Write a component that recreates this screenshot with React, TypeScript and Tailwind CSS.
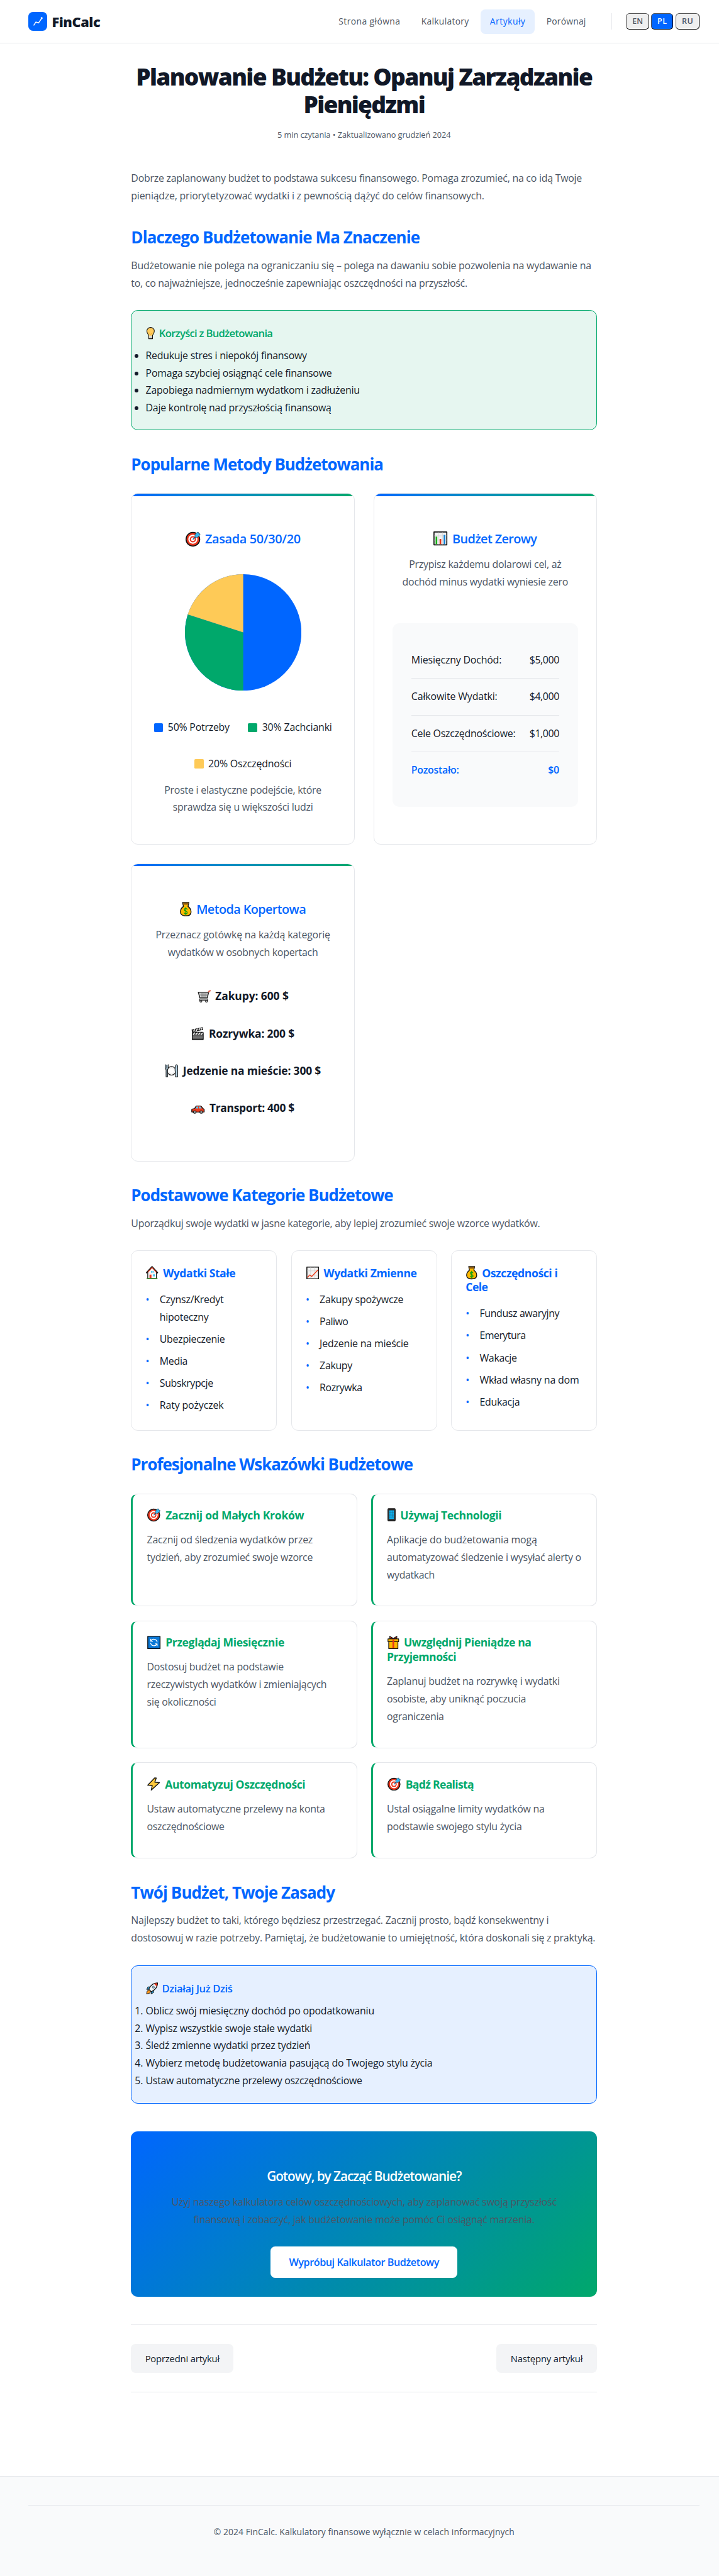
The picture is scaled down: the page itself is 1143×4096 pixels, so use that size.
import React, { useLayoutEffect, useRef } from "react";

let pen: CanvasRenderingContext2D | null = null;

/** One line of text, tracked so that it runs to the given width. */
function T({ w, children, className = "" }: { w: number; children: string; className?: string }) {
  const ref = useRef<HTMLSpanElement>(null);
  useLayoutEffect(() => {
    const el = ref.current;
    if (!el) return;
    pen = pen || document.createElement("canvas").getContext("2d");
    if (!pen) return;
    const s = getComputedStyle(el);
    pen.font = `${s.fontWeight} 100px ${s.fontFamily}`;
    const natural = pen.measureText(children).width / 100;
    const size = parseFloat(s.fontSize);
    el.style.letterSpacing = `${(w / size - natural) / children.length}em`;
  }, [w, children]);
  return (
    <span ref={ref} className={`inline-block whitespace-nowrap ${className}`}>
      {children}
    </span>
  );
}

type Line = [string, number];

function Lines({ lines, className = "" }: { lines: Line[]; className?: string }) {
  return (
    <p className={`text-[17.2px] leading-[30px] text-[#4b5563] ${className}`}>
      {lines.map(([t, w]) => (
        <span key={t} className="block">
          <T w={w}>{t}</T>
        </span>
      ))}
    </p>
  );
}

/* ---------- icons ---------- */

function Svg({ children, className }: { children: React.ReactNode; className: string }) {
  return (
    <svg viewBox="0 0 24 24" preserveAspectRatio="none" className={`shrink-0 ${className}`} strokeLinejoin="round" strokeLinecap="round" fill="none">
      {children}
    </svg>
  );
}

const Target = ({ className = "h-[24px] w-[24px]" }) => (
  <Svg className={className}>
    <circle cx="11.6" cy="12.4" r="10.8" fill="#e8341c" stroke="#111" strokeWidth="1.6" />
    <circle cx="11.6" cy="12.4" r="7.2" fill="#fff" />
    <circle cx="11.6" cy="12.4" r="5" fill="#e8341c" />
    <circle cx="11.6" cy="12.4" r="2.9" fill="#fff" />
    <path d="M12 12.2 17 7" stroke="#0b63a8" strokeWidth="1.4" />
    <path d="M15 9.2 14.8 5.4 18.6 1.2 20.4 1.4 20.8 3.4 22.9 3.8 22.8 5.6 19 9.4Z" fill="#35b8f1" stroke="#123" strokeWidth=".6" />
  </Svg>
);

const Bulb = () => (
  <Svg className="h-[21px] w-[16px]">
    <path d="M7 22.8h10v-6.500c.6-1.600 4.600-3.600 4.600-8.500C21.600 3.500 17 1 12 1S2.400 3.500 2.400 7.800c0 4.900 4 6.900 4.600 8.500Z" fill="#ffcb5c" stroke="#111" strokeWidth="1.700" />
    <path d="M8.500 17h7v4.800h-7Z" fill="#d6d6d6" />
    <path d="M9.500 12.500 12 14.500 14.500 12.500" stroke="#e8a020" strokeWidth="1.200" />
  </Svg>
);

const Bars = () => (
  <Svg className="h-[24px] w-[24px]">
    <rect x="1" y="1" width="22" height="22" fill="#f1f1f1" stroke="#111" strokeWidth="1.800" />
    <path d="M2 7.500h20M2 15h20M8.500 2v20M15.500 2v20" stroke="#d4d4d4" strokeWidth=".8" />
    <path d="M5.200 22V9" stroke="#16b316" strokeWidth="2.800" strokeLinecap="butt" />
    <path d="M12 22V13" stroke="#e8341c" strokeWidth="2.800" strokeLinecap="butt" />
    <path d="M19 22V6" stroke="#0f7fd8" strokeWidth="2.800" strokeLinecap="butt" />
  </Svg>
);

const Trend = () => (
  <Svg className="h-[22px] w-[22px]">
    <rect x="1" y="1" width="22" height="22" fill="#f3f3f3" stroke="#111" strokeWidth="1.800" />
    <path d="M2 8h20M2 16h20M8 2v20M16 2v20" stroke="#cfcfcf" strokeWidth=".9" />
    <path d="M2.500 20 6.500 15.500 10 18.500 21.500 6.500" stroke="#f03a17" strokeWidth="1.600" />
  </Svg>
);

const Bag = ({ className = "h-[25px] w-[20px]" }) => (
  <Svg className={className}>
    <path d="M5.500 1h13l-1.800 6.500C20.500 9.800 23 13 23 16.500c0 4.300-4.600 6.600-11 6.600S1 20.800 1 16.500C1 13 3.500 9.800 7.300 7.500Z" fill="#fdb900" stroke="#111" strokeWidth="1.700" />
    <path d="M6.300 1.500h11.400l-.8 3.200H7.100Z" fill="#8a5a14" />
    <path d="M14.800 12.300c-.6-1-1.600-1.400-2.800-1.400-1.600 0-2.900.8-2.900 2.200 0 3.200 6 1.500 6 4.600 0 1.400-1.400 2.200-3.100 2.200-1.400 0-2.500-.5-3.100-1.600M12 9.300v12" stroke="#10a010" strokeWidth="1.700" />
  </Svg>
);

const Cart = () => (
  <Svg className="h-[22px] w-[23px]">
    <path d="M1.500 4.500 4.200 15h13.300L20 4" fill="#d6d6d6" stroke="#1c1c1c" strokeWidth="1.600" />
    <path d="M1.500 4.500h18L21 2" stroke="#1c1c1c" strokeWidth="1.600" />
    <path d="M5 8h13M5.500 11h12M8 6v7M11.500 6v7M15 6v7" stroke="#555" strokeWidth=".9" />
    <path d="M3.500 17.500h15v2.200h-15Z" fill="#d9d9d9" stroke="#1c1c1c" strokeWidth="1.200" />
    <path d="M20 3.500 22.500 1.500" stroke="#e5735f" strokeWidth="2.600" />
    <circle cx="6" cy="21.300" r="1.800" fill="#ccc" stroke="#1c1c1c" strokeWidth="1.200" />
    <circle cx="16" cy="21.300" r="1.800" fill="#ccc" stroke="#1c1c1c" strokeWidth="1.200" />
  </Svg>
);

const Clapper = () => (
  <Svg className="h-[23px] w-[22px]">
    <rect x="2" y="9.500" width="20.500" height="13.500" rx="1" fill="#555" stroke="#111" strokeWidth="1.500" />
    <path d="M1.300 5 21 1l.8 3.600L2.200 8.800Z" fill="#333" stroke="#111" strokeWidth="1.200" />
    <path d="M4.500 7.300 6.500 4.500M9.500 6.200l2-2.800M14.500 5.200l2-2.800M19 4.200l1-2" stroke="#fff" strokeWidth="1.700" />
    <path d="M4 13.200 6.500 10.500M9 13.200l2.500-2.700M14 13.200l2.500-2.700M19 13.200l2-2.500" stroke="#fff" strokeWidth="1.700" />
    <path d="M3 16.200h18.500M3 19.300h18.500" stroke="#a8a8a8" strokeWidth="1" />
  </Svg>
);

const Plate = () => (
  <Svg className="h-[23px] w-[23px]">
    <circle cx="12" cy="12" r="7.700" fill="#f4f4f4" stroke="#222" strokeWidth="1.300" />
    <circle cx="12" cy="12" r="5.200" fill="#fff" stroke="#ddd" strokeWidth=".7" />
    <path d="M1 1v7l1.300 2V22.800h2.600V10L6 8V1M3.500 1.500v6" fill="#bcd9ea" stroke="#111" strokeWidth="1.200" />
    <path d="M19 22.800V13.500c-1-2-1-12.300 2-12.300 2 0 2.200 2 2.200 5V22.800Z" fill="#bcd9ea" stroke="#111" strokeWidth="1.200" />
  </Svg>
);

const Car = () => (
  <Svg className="mt-[6px] h-[14px] w-[23px]">
    <path d="M1 11.500c0-2 2.500-2.600 5-2.900L8.500 2c.3-.7.7-1 1.500-1h6.200c.8 0 1.400.4 1.800 1.200l3.200 6.600c1.600.6 1.900 1.500 1.900 3V19H1Z" fill="#ea3a1c" stroke="#111" strokeWidth="1.600" />
    <path d="M8 8.500 9.500 3h2.800v5.500ZM13.800 3h2.500l2.300 5.500h-4.800Z" fill="#5cc8f5" />
    <ellipse cx="6.200" cy="19" rx="2.600" ry="4" fill="#999" stroke="#111" strokeWidth="1.300" />
    <ellipse cx="18" cy="19" rx="2.600" ry="4" fill="#999" stroke="#111" strokeWidth="1.300" />
  </Svg>
);

const House = () => (
  <Svg className="h-[23px] w-[21px]">
    <path d="M3.500 10V23h17V10L12 2.200Z" fill="#f3f3f3" stroke="#111" strokeWidth="1.500" />
    <path d="M1.500 12 12 1.500 22.500 12" stroke="#111" strokeWidth="2.600" />
    <path d="M3.800 11 12 2.800 20.200 11" stroke="#e8452c" strokeWidth="1.500" />
    <path d="M7 15.500h3.800V22H7Z" fill="#e8341c" />
    <path d="M10 9h2v3h-2ZM13 9h2v3h-2ZM14 15h3.500v3.500H14Z" fill="#38c3f5" />
    <path d="M2 22.600h20" stroke="#3b8f2a" strokeWidth="1.800" />
  </Svg>
);

const Phone = () => (
  <Svg className="h-[23px] w-[14px]">
    <rect x="1" y="1" width="22" height="22" rx="2" fill="#2d2d2d" stroke="#111" strokeWidth="1.600" />
    <path d="M5 4h14v15.500H5Z" fill="#0cb5f4" />
    <path d="M5 8h14M5 12.500h14M5 16h14M10 4v8M15 4v12" stroke="#205f80" strokeWidth=".9" />
  </Svg>
);

const Refresh = () => (
  <Svg className="h-[23px] w-[23px]">
    <rect x="1" y="1" width="22" height="22" fill="#0a78d6" stroke="#111" strokeWidth="1.600" />
    <path d="M6.200 6v3.600h3.500M6.600 9.400A6 6 0 0 1 17.800 11M17.800 18v-3.600h-3.500M17.400 14.600A6 6 0 0 1 6.200 13" stroke="#fff" strokeWidth="1.400" />
  </Svg>
);

const Gift = () => (
  <Svg className="h-[23px] w-[20px]">
    <path d="M5 5.500 4.500 1 9 3l3 2 3-2 4.500-2L19 5.500Z" fill="#e8341c" stroke="#111" strokeWidth="1.300" />
    <path d="M2.500 10.500h19V23h-19Z" fill="#fdb900" stroke="#111" strokeWidth="1.500" />
    <path d="M1 5.500h22v5H1Z" fill="#fdb900" stroke="#111" strokeWidth="1.500" />
    <path d="M12 6.200v16" stroke="#e8341c" strokeWidth="3.400" strokeLinecap="butt" />
  </Svg>
);

const Bolt = () => (
  <Svg className="h-[23px] w-[22px]">
    <path d="M14 1 1 14.200l8.500.8L7.500 23 23 9.500l-8.800-.8L17 1.300Z" fill="#ffc83d" stroke="#111" strokeWidth="1.600" />
  </Svg>
);

const Rocket = () => (
  <Svg className="h-[21px] w-[21px]">
    <path d="M8 9H4L1.500 14l4.500-.5ZM15 16v4l-5 3 .5-5Z" fill="#2da9e8" stroke="#111" strokeWidth="1.200" />
    <path d="M6.500 14.500 2.500 17 1.200 22.800 7 21.500l2.800-3.700Z" fill="#f7941d" stroke="#111" strokeWidth="1.200" />
    <path d="M22.800 1.200C15 1 10 4.500 5.500 13.500l5 5C19.500 14 23 9 22.800 1.200Z" fill="#eef4f8" stroke="#111" strokeWidth="1.500" />
    <path d="M22.200 1.800c-2.500-.1-4.500.2-6.400 1l5.400 5.400c.8-1.900 1.100-3.900 1-6.400Z" fill="#e8341c" />
    <circle cx="14.500" cy="9.500" r="2.200" fill="#9fc4da" stroke="#345" strokeWidth=".8" />
  </Svg>
);

/* ---------- building blocks ---------- */

function H2({ children, w, className = "" }: { children: string; w: number; className?: string }) {
  return (
    <h2 className={`text-[28px] leading-[34px] font-bold text-[#0066ff] ${className}`}>
      <T w={w}>{children}</T>
    </h2>
  );
}

function MethodCard({ icon, title, w, children, className = "" }: { icon: React.ReactNode; title: string; w: number; children: React.ReactNode; className?: string }) {
  return (
    <div className={`overflow-hidden rounded-xl border border-[#e5e7eb] bg-white text-center ${className}`}>
      <div className="h-1 bg-linear-to-r from-[#0066ff] to-[#00a86b]" />
      <h3 className="mt-[59.500px] flex h-[28px] items-center justify-center gap-2 text-[21.500px] leading-[28px] font-semibold text-[#0066ff]">
        {icon}
        <T w={w}>{title}</T>
      </h3>
      {children}
    </div>
  );
}

function Legend({ color, w, children }: { color: string; w: number; children: string }) {
  return (
    <div className="flex items-center gap-2 text-[17.2px] leading-[30px] text-[#111827]">
      <span className={`size-4 rounded-xs ${color}`} />
      <T w={w}>{children}</T>
    </div>
  );
}

function Category({ icon, title, items }: { icon: React.ReactNode; title: Line[]; items: [string, number][][] }) {
  return (
    <div className="rounded-xl border border-[#e5e7eb] px-6 pt-[25px]">
      <h4 className="text-[19px] leading-[24.300px] font-bold text-[#0066ff]">
        <span className="flex h-[24.300px] items-center gap-2 pl-px">
          {icon}
          <T w={title[0][1]}>{title[0][0]}</T>
        </span>
        {title[1] && <T w={title[1][1]}>{title[1][0]}</T>}
      </h4>
      <ul className="mt-[19px] flex flex-col gap-2 text-[17.2px] leading-[30px] text-[#111827]">
        {items.map((it) => (
          <li key={it[0][0]} className="flex">
            <span className="w-6 shrink-0 text-[#0066ff]">•</span>
            <span>
              {it.map(([t, w]) => (
                <span key={t} className="block">
                  <T w={w}>{t}</T>
                </span>
              ))}
            </span>
          </li>
        ))}
      </ul>
    </div>
  );
}

function Tip({ icon, title, lines }: { icon: React.ReactNode; title: Line[]; lines: Line[] }) {
  return (
    <div className="rounded-xl border border-l-4 border-[#e5e7eb] border-l-[#00a86b] px-6 pt-6">
      <h4 className="text-[19px] leading-[24.300px] font-bold text-[#00a86b]">
        <span className="flex h-[24.300px] items-center gap-2 pl-px">
          {icon}
          <T w={title[0][1]}>{title[0][0]}</T>
        </span>
        {title[1] && <T w={title[1][1]}>{title[1][0]}</T>}
      </h4>
      <Lines className="mt-4" lines={lines} />
    </div>
  );
}

function Row({ label, value, w, vw, last }: { label: string; value: string; w: number; vw: number; last?: boolean }) {
  return (
    <div className={`flex justify-between py-4 leading-[30px] ${last ? "font-semibold text-[#0066ff]" : "border-b border-[#e5e7eb]"}`}>
      <T w={w}>{label}</T>
      <T w={vw}>{value}</T>
    </div>
  );
}

function Lang({ children, w, on, className }: { children: string; w: number; on?: boolean; className: string }) {
  return (
    <button className={`flex h-[28px] items-center justify-center rounded-md border-2 border-black text-[13.500px] leading-none font-semibold [border-style:outset] ${on ? "bg-[#0066ff] text-white" : "bg-[#efefef] text-[#4b5563]"} ${className}`}>
      <T w={w}>{children}</T>
    </button>
  );
}

/* ---------- page ---------- */

export default function App() {
  return (
    <div className="h-[4096px] w-[1143px] overflow-hidden bg-white">
      <div className="flex h-[4430px] w-[1250px] flex-col bg-white font-['Open_Sans','Noto_Sans',sans-serif] text-[#111827] [zoom:0.926]">
        <header className="flex h-[75px] shrink-0 items-center justify-between border-b border-[#e5e7eb] px-[49px]">
          <div className="flex items-center gap-2">
            <span className="flex size-8 items-center justify-center rounded-lg bg-[#0066ff]">
              <svg viewBox="0 0 16 16" className="size-4" fill="none" stroke="#fff" strokeWidth="1.600" strokeLinecap="round" strokeLinejoin="round">
                <path d="M1 14 4.300 8.700 9 10.200 14.500 2" />
                <circle cx="14.300" cy="1.900" r="1.300" fill="#fff" strokeWidth=".8" />
              </svg>
            </span>
            <span className="pt-px text-[23.500px] leading-8 font-extrabold">
              <T w={83}>FinCalc</T>
            </span>
          </div>
          <div className="flex items-center">
            <nav className="flex items-center gap-1 text-[15px] leading-[24px] font-medium text-[#4b5563]">
              <a className="px-4 py-[9px]"><T w={106}>Strona główna</T></a>
              <a className="px-4 py-[9px]"><T w={82}>Kalkulatory</T></a>
              <a className="rounded-lg bg-[#e6f0ff] px-4 py-[9px] text-[#0066ff]"><T w={61}>Artykuły</T></a>
              <a className="px-4 py-[9px]"><T w={68}>Porównaj</T></a>
            </nav>
            <div className="ml-[28px] flex h-[28px] items-center gap-1 border-l border-[#e5e7eb] pl-6">
              <Lang w={18} className="w-[39px]">EN</Lang>
              <Lang w={17} on className="w-[38px]">PL</Lang>
              <Lang w={20} className="w-[41px]">RU</Lang>
            </div>
          </div>
        </header>

        <main className="mx-auto flex w-[800px] shrink-0 flex-col">
          <h1 className="mt-[33px] text-center text-[40px] leading-[48px] font-extrabold">
            <span className="-mx-4 block"><T w={783}>Planowanie Budżetu: Opanuj Zarządzanie</T></span>
            <span className="block"><T w={208}>Pieniędzmi</T></span>
          </h1>
          <div className="mt-[15.500px] text-center text-[13.800px] leading-6 text-[#4b5563]">
            <T w={298}>5 min czytania • Zaktualizowano grudzień 2024</T>
          </div>

          <Lines
            className="mt-[48px]"
            lines={[
              ["Dobrze zaplanowany budżet to podstawa sukcesu finansowego. Pomaga zrozumieć, na co idą Twoje", 775],
              ["pieniądze, priorytetyzować wydatki i z pewnością dążyć do celów finansowych.", 607],
            ]}
          />

          <H2 className="mt-[39px]" w={496}>Dlaczego Budżetowanie Ma Znaczenie</H2>
          <Lines
            className="mt-[17px]"
            lines={[
              ["Budżetowanie nie polega na ograniczaniu się – polega na dawaniu sobie pozwolenia na wydawanie na", 791],
              ["to, co najważniejsze, jednocześnie zapewniając oszczędności na przyszłość.", 578],
            ]}
          />

          <section className="mt-[31px] h-[206px] rounded-xl border border-[#00a86b] bg-[#e6f6f0] px-6 pt-[27px]">
            <h4 className="flex h-6 items-center gap-[7px] text-[18px] leading-6 font-semibold text-[#00a86b]">
              <Bulb />
              <T w={195}>Korzyści z Budżetowania</T>
            </h4>
            <ul className="mt-[11.500px] list-disc text-[17.2px] leading-[29.900px]">
              <li><T w={277} className="align-top">Redukuje stres i niepokój finansowy</T></li>
              <li><T w={320} className="align-top">Pomaga szybciej osiągnąć cele finansowe</T></li>
              <li><T w={368} className="align-top">Zapobiega nadmiernym wydatkom i zadłużeniu</T></li>
              <li><T w={319} className="align-top">Daje kontrolę nad przyszłością finansową</T></li>
            </ul>
          </section>

          <H2 className="mt-[42px]" w={433}>Popularne Metody Budżetowania</H2>
          <div className="mt-8 grid grid-cols-2 grid-rows-[604px_512px] gap-8">
            <MethodCard icon={<Target className="h-[26px] w-[26px]" />} title="Zasada 50/30/20" w={164}>
              <svg viewBox="-100 -100 200 200" className="mx-auto mt-[46.500px] size-[200px]">
                <circle r="100" fill="#0066ff" />
                <path d="M0 0V100A100 100 0 0 1 -95.106 -30.902Z" fill="#00a86b" />
                <path d="M0 0L-95.106 -30.902A100 100 0 0 1 0 -100Z" fill="#feca57" />
              </svg>
              <div className="mt-[49px] flex flex-wrap justify-center gap-x-8 gap-y-[32.500px]">
                <Legend color="bg-[#0066ff]" w={106}>50% Potrzeby</Legend>
                <Legend color="bg-[#00a86b]" w={120}>30% Zachcianki</Legend>
                <Legend color="bg-[#feca57]" w={143}>20% Oszczędności</Legend>
              </div>
              <Lines
                className="mt-[15px]"
                lines={[
                  ["Proste i elastyczne podejście, które", 270],
                  ["sprawdza się u większości ludzi", 241],
                ]}
              />
            </MethodCard>

            <MethodCard icon={<Bars />} title="Budżet Zerowy" w={145}>
              <Lines
                className="mt-4"
                lines={[
                  ["Przypisz każdemu dolarowi cel, aż", 262],
                  ["dochód minus wydatki wyniesie zero", 285],
                ]}
              />
              <div className="mx-8 mt-[55.500px] rounded-xl bg-[#f9fafb] p-8 text-[17.2px]">
                <Row label="Miesięczny Dochód:" value="$5,000" w={155} vw={51} />
                <Row label="Całkowite Wydatki:" value="$4,000" w={148} vw={51} />
                <Row label="Cele Oszczędnościowe:" value="$1,000" w={179} vw={51} />
                <Row label="Pozostało:" value="$0" w={82} vw={19} last />
              </div>
            </MethodCard>

            <MethodCard icon={<Bag />} title="Metoda Kopertowa" w={188}>
              <Lines
                className="mt-4"
                lines={[
                  ["Przeznacz gotówkę na każdą kategorię", 300],
                  ["wydatków w osobnych kopertach", 258],
                ]}
              />
              <div className="mt-[45px] flex flex-col gap-[34px] text-[18.800px] leading-[30px] font-bold">
                <div className="flex items-center justify-center gap-2"><Cart /><T w={126}>Zakupy: 600 $</T></div>
                <div className="flex items-center justify-center gap-2"><Clapper /><T w={147}>Rozrywka: 200 $</T></div>
                <div className="flex items-center justify-center gap-2"><Plate /><T w={237}>Jedzenie na mieście: 300 $</T></div>
                <div className="flex items-center justify-center gap-2"><Car /><T w={146}>Transport: 400 $</T></div>
              </div>
            </MethodCard>
          </div>

          <H2 className="mt-[41.500px]" w={450}>Podstawowe Kategorie Budżetowe</H2>
          <Lines className="mt-[16.500px]" lines={[["Uporządkuj swoje wydatki w jasne kategorie, aby lepiej zrozumieć swoje wzorce wydatków.", 703]]} />
          <div className="mt-[31px] grid h-[309px] grid-cols-3 gap-6">
            <Category
              icon={<House />}
              title={[["Wydatki Stałe", 124]]}
              items={[
                [["Czynsz/Kredyt", 110], ["hipoteczny", 84]],
                [["Ubezpieczenie", 112]],
                [["Media", 48]],
                [["Subskrypcje", 92]],
                [["Raty pożyczek", 110]],
              ]}
            />
            <Category
              icon={<Trend />}
              title={[["Wydatki Zmienne", 160]]}
              items={[
                [["Zakupy spożywcze", 144]],
                [["Paliwo", 49]],
                [["Jedzenie na mieście", 153]],
                [["Zakupy", 56]],
                [["Rozrywka", 73]],
              ]}
            />
            <Category
              icon={<Bag className="h-[23px] w-[19px]" />}
              title={[["Oszczędności i", 130], ["Cele", 38]]}
              items={[
                [["Fundusz awaryjny", 137]],
                [["Emerytura", 79]],
                [["Wakacje", 64]],
                [["Wkład własny na dom", 171]],
                [["Edukacja", 69]],
              ]}
            />
          </div>

          <H2 className="mt-[41.500px]" w={484}>Profesjonalne Wskazówki Budżetowe</H2>
          <div className="mt-[32.500px] grid grid-cols-2 grid-rows-[194px_219px_165px] gap-x-6 gap-y-[24.500px]">
            <Tip
              icon={<Target className="h-[23px] w-[23px]" />}
              title={[["Zacznij od Małych Kroków", 238]]}
              lines={[["Zacznij od śledzenia wydatków przez", 285], ["tydzień, aby zrozumieć swoje wzorce", 285]]}
            />
            <Tip
              icon={<Phone />}
              title={[["Używaj Technologii", 174]]}
              lines={[["Aplikacje do budżetowania mogą", 258], ["automatyzować śledzenie i wysyłać alerty o", 334], ["wydatkach", 82]]}
            />
            <Tip
              icon={<Refresh />}
              title={[["Przeglądaj Miesięcznie", 204]]}
              lines={[["Dostosuj budżet na podstawie", 235], ["rzeczywistych wydatków i zmieniających", 309], ["się okoliczności", 119]]}
            />
            <Tip
              icon={<Gift />}
              title={[["Uwzględnij Pieniądze na", 219], ["Przyjemności", 119]]}
              lines={[["Zaplanuj budżet na rozrywkę i wydatki", 297], ["osobiste, aby uniknąć poczucia", 239], ["ograniczenia", 98]]}
            />
            <Tip
              icon={<Bolt />}
              title={[["Automatyzuj Oszczędności", 241]]}
              lines={[["Ustaw automatyczne przelewy na konta", 306], ["oszczędnościowe", 133]]}
            />
            <Tip
              icon={<Target className="h-[23px] w-[23px]" />}
              title={[["Bądź Realistą", 117]]}
              lines={[["Ustal osiągalne limity wydatków na", 271], ["podstawie swojego stylu życia", 232]]}
            />
          </div>

          <H2 className="mt-[42px]" w={350}>Twój Budżet, Twoje Zasady</H2>
          <Lines
            className="mt-4"
            lines={[
              ["Najlepszy budżet to taki, którego będziesz przestrzegać. Zacznij prosto, bądź konsekwentny i", 718],
              ["dostosowuj w razie potrzeby. Pamiętaj, że budżetowanie to umiejętność, która doskonali się z praktyką.", 798],
            ]}
          />
          <section className="mt-[31px] h-[237.500px] rounded-xl border border-[#0066ff] bg-[#e6f0ff] px-6 pt-[27.500px]">
            <h4 className="flex h-6 items-center gap-[7px] text-[18px] leading-6 font-semibold text-[#0066ff]">
              <Rocket />
              <T w={121}>Działaj Już Dziś</T>
            </h4>
            <ol className="mt-[11.500px] list-decimal text-[17.2px] leading-[29.900px]">
              <li><T w={393} className="align-top">Oblicz swój miesięczny dochód po opodatkowaniu</T></li>
              <li><T w={286} className="align-top">Wypisz wszystkie swoje stałe wydatki</T></li>
              <li><T w={283} className="align-top">Śledź zmienne wydatki przez tydzień</T></li>
              <li><T w={493} className="align-top">Wybierz metodę budżetowania pasującą do Twojego stylu życia</T></li>
              <li><T w={372} className="align-top">Ustaw automatyczne przelewy oszczędnościowe</T></li>
            </ol>
          </section>

          <section className="mt-12 flex h-[284px] flex-col items-center rounded-xl bg-[linear-gradient(135deg,#0066ff_0%,#00a86b_100%)] pt-[62.500px] text-center">
            <h3 className="text-[22.500px] leading-[30px] font-semibold text-white">
              <T w={334}>Gotowy, by Zacząć Budżetowanie?</T>
            </h3>
            <Lines
              className="mt-[14.500px]"
              lines={[
                ["Użyj naszego kalkulatora celów oszczędnościowych, aby zaplanować swoją przyszłość", 662],
                ["finansową i zobaczyć, jak budżetowanie może pomóc Ci osiągnąć marzenia.", 586],
              ]}
            />
            <a className="mt-[31px] flex h-[54px] w-[321px] items-center justify-center rounded-lg bg-white text-[17.500px] font-semibold text-[#0066ff]">
              <T w={258}>Wypróbuj Kalkulator Budżetowy</T>
            </a>
          </section>

          <div className="mt-12 flex h-[116px] items-center justify-between border-y border-[#e5e7eb] text-[16px] font-medium">
            <a className="flex h-[50px] w-[176px] items-center justify-center rounded-lg bg-[#f3f4f6]"><T w={128}>Poprzedni artykuł</T></a>
            <a className="flex h-[50px] w-[173px] items-center justify-center rounded-lg bg-[#f3f4f6]"><T w={124}>Następny artykuł</T></a>
          </div>
        </main>

        <footer className="mt-[144px] grow border-t border-[#e5e7eb] bg-[#f9fafb] px-[49px] pt-12">
          <div className="border-t border-[#e5e7eb] pt-[34px] text-center text-[15px] leading-6 text-[#4b5563]">
            <T w={517}>© 2024 FinCalc. Kalkulatory finansowe wyłącznie w celach informacyjnych</T>
          </div>
        </footer>
      </div>
    </div>
  );
}
